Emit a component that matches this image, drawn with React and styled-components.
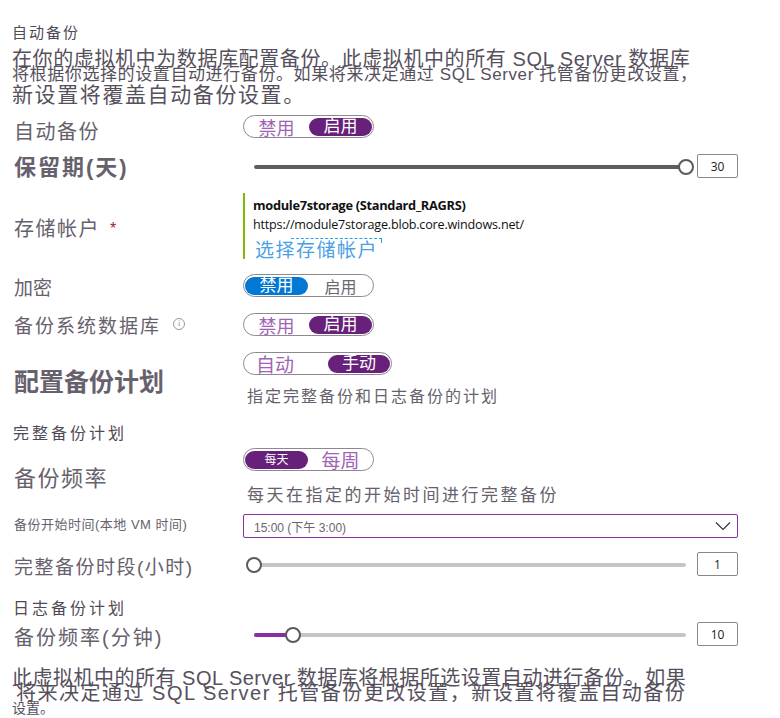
import React from 'react'
import styled, { createGlobalStyle } from 'styled-components'

const GlobalStyle = createGlobalStyle`
  html, body {
    margin: 0;
    padding: 0;
    background: #ffffff;
  }
  body {
    font-family: "Liberation Sans", "Noto Sans CJK SC", sans-serif;
    color: #625c69;
  }
`

const Page = styled.div`
  width: 780px;
  height: 718px;
  overflow: hidden;
  padding: 25px 0 0 12px;
  box-sizing: border-box;
`

const Heading = styled.div`
  font-size: ${p => p.$size || 15}px;
  line-height: ${p => p.$lh || 16}px;
  letter-spacing: ${p => p.$ls || 0}px;
  margin-top: ${p => p.$mt || 0}px;
  padding-left: ${p => p.$pl || 0}px;
  color: #4f4a56;
`

const Para = styled.div`
  margin-top: ${p => p.$mt || 0}px;
  white-space: nowrap;
`

const Line = styled.div`
  font-size: ${p => p.$size}px;
  line-height: ${p => p.$lh}px;
  height: ${p => p.$lh}px;
  padding-left: ${p => p.$pl || 0}px;
  letter-spacing: ${p => p.$ls || 0}px;
  color: #56505d;
`

const Row = styled.div`
  display: grid;
  grid-template-columns: 229px 495px;
  align-items: start;
  padding-left: 2px;
  margin-top: ${p => p.$mt || 0}px;
  height: ${p => p.$h}px;
`

const Label = styled.div`
  font-size: ${p => p.$size}px;
  line-height: ${p => p.$lh}px;
  letter-spacing: ${p => p.$ls || 0}px;
  padding-top: ${p => p.$pt || 0}px;
  font-weight: ${p => (p.$bold ? 600 : 400)};
  color: #67616d;
  white-space: nowrap;
  display: flex;
  align-items: center;
`

const Required = styled.span`
  color: #a4262c;
  font-size: 16px;
  margin-left: 10px;
`

const InfoIcon = styled.span`
  display: inline-flex;
  align-items: center;
  justify-content: center;
  width: 10px;
  height: 10px;
  border: 1px solid #9a9a9a;
  border-radius: 50%;
  font-size: 8px;
  line-height: 10px;
  letter-spacing: 0;
  color: #8a8a8a;
  margin-left: 12px;
  margin-top: -6px;
  font-family: "Liberation Serif", serif;
`

const Control = styled.div`
  display: flex;
  flex-direction: column;
  align-items: flex-start;
`

const Toggle = styled.div`
  display: flex;
  align-items: center;
  justify-content: space-between;
  width: ${p => p.$w || 131}px;
  height: 23px;
  box-sizing: border-box;
  border: 1px solid #8d8a8f;
  border-radius: 12px;
  padding: 0 1px;
`

const Option = styled.div`
  height: ${p => (p.$on ? 18 : 22)}px;
  width: ${p => p.$w || 63}px;
  border-radius: 10px;
  display: flex;
  align-items: center;
  justify-content: center;
  overflow: visible;
  white-space: nowrap;
  font-size: ${p => p.$size || 17}px;
  line-height: 18px;
  background: ${p => (p.$on ? (p.$blue ? '#0078d4' : '#68217a') : 'transparent')};
  color: ${p => (p.$on ? '#ffffff' : p.$gray ? '#6b6670' : '#a064b5')};
  padding-top: ${p => (p.$on ? 0 : 5)}px;
  box-sizing: border-box;
`

const Hint = styled.div`
  font-size: ${p => p.$size}px;
  line-height: ${p => p.$lh}px;
  letter-spacing: ${p => p.$ls || 0}px;
  margin-top: ${p => p.$mt}px;
  padding-left: 4px;
  color: #67616d;
  white-space: nowrap;
`

const SliderRow = styled.div`
  display: flex;
  align-items: center;
  height: 24px;
  width: 495px;
`

const Slider = styled.div`
  position: relative;
  width: 448px;
  height: 24px;
  margin-left: 3px;
`

const Track = styled.div`
  position: absolute;
  left: 8px;
  right: 8px;
  top: 11px;
  height: 4px;
  border-radius: 2px;
  background: ${p => (p.$dark ? '#605e5c' : '#c8c6c4')};
`

const Fill = styled.div`
  position: absolute;
  left: 8px;
  top: 11px;
  height: 4px;
  border-radius: 2px;
  background: #8a2da5;
`

const Thumb = styled.div`
  position: absolute;
  top: 5px;
  width: 16px;
  height: 16px;
  margin-left: -8px;
  box-sizing: border-box;
  border-radius: 50%;
  border: 2px solid #5c5a58;
  background: #ffffff;
`

const ValueBox = styled.div`
  width: 41px;
  height: 24px;
  box-sizing: border-box;
  margin-left: 3px;
  border: 1px solid #8a8886;
  border-radius: 2px;
  display: flex;
  align-items: center;
  justify-content: center;
  font-family: "Open Sans", "Liberation Sans", sans-serif;
  font-size: 12px;
  color: #1b1b1b;
`

const Storage = styled.div`
  border-left: 2px solid #7fba00;
  height: 66px;
  box-sizing: border-box;
  padding: 2px 0 0 8px;
  display: flex;
  flex-direction: column;
`

const StorageName = styled.div`
  font-family: "Open Sans", "Liberation Sans", sans-serif;
  font-weight: 700;
  font-size: 12.8px;
  line-height: 21px;
  color: #111111;
  letter-spacing: -0.3px;
  flex-shrink: 0;
`

const StorageUrl = styled.div`
  font-family: "Open Sans", "Liberation Sans", sans-serif;
  font-size: 12.6px;
  line-height: 18px;
  color: #111111;
  letter-spacing: -0.2px;
  flex-shrink: 0;
`

const PickLink = styled.div`
  position: relative;
  flex-shrink: 0;
  font-size: 19px;
  line-height: 20px;
  margin-top: 7px;
  padding-left: 2px;
  color: #4aa0e6;
  letter-spacing: 1.5px;

  &::before {
    content: '';
    position: absolute;
    left: 38px;
    top: -3px;
    width: 90px;
    height: 4px;
    border-top: 1px dashed #2e9be6;
    border-right: 1px dashed #2e9be6;
  }
`

const Select = styled.div`
  width: 495px;
  height: 24px;
  box-sizing: border-box;
  border: 1px solid #8a2da5;
  border-radius: 2px;
  display: flex;
  align-items: center;
  justify-content: space-between;
  padding: 0 6px 0 10px;
  font-size: 12px;
  color: #6a6570;
`

const Chevron = () => (
  <svg width="16" height="10" viewBox="0 0 16 10">
    <path d="M1 1.5 L8 8.5 L15 1.5" fill="none" stroke="#333" strokeWidth="1.2" />
  </svg>
)

const RangeInput = ({ value, pct, dark, fill }) => (
  <SliderRow>
    <Slider>
      <Track $dark={dark} />
      {fill && <Fill style={{ width: `${pct * 432}px` }} />}
      <Thumb style={{ left: `${8 + pct * 432}px` }} />
    </Slider>
    <ValueBox>{value}</ValueBox>
  </SliderRow>
)

const App = () => {
  return (
    <Page>
      <GlobalStyle />
      <Heading $size={15} $lh={16} $ls={2}>自动备份</Heading>
      <Para $mt={12}>
        <Line $size={20} $lh={12} $ls={0.6}>在你的虚拟机中为数据库配置备份。此虚拟机中的所有 SQL Server 数据库</Line>
        <Line $size={17} $lh={20} $ls={0.6}>将根据你选择的设置自动进行备份。如果将来决定通过 SQL Server 托管备份更改设置，</Line>
        <Line $size={21} $lh={19} $ls={1.6}>新设置将覆盖自动备份设置。</Line>
      </Para>

      <Row $mt={11} $h={24}>
        <Label $size={20} $lh={22} $pt={6} $ls={1.5}>自动备份</Label>
        <Control>
          <Toggle>
            <Option $size={18}>禁用</Option>
            <Option $on>启用</Option>
          </Toggle>
        </Control>
      </Row>

      <Row $mt={15} $h={24}>
        <Label $size={22} $lh={24} $pt={2} $ls={2} $bold>保留期(天)</Label>
        <RangeInput value="30" pct={1} dark />
      </Row>

      <Row $mt={15} $h={66}>
        <Label $size={20} $lh={22} $pt={25} $ls={1.5}>
          存储帐户<Required>*</Required>
        </Label>
        <Storage>
          <StorageName>module7storage (Standard_RAGRS)</StorageName>
          <StorageUrl>https://module7storage.blob.core.windows.net/</StorageUrl>
          <PickLink>选择存储帐户</PickLink>
        </Storage>
      </Row>

      <Row $mt={15} $h={23}>
        <Label $size={19} $lh={22} $pt={4}>加密</Label>
        <Control>
          <Toggle>
            <Option $on $blue>禁用</Option>
            <Option $gray $size={16}>启用</Option>
          </Toggle>
        </Control>
      </Row>

      <Row $mt={16} $h={23}>
        <Label $size={19} $lh={22} $pt={3} $ls={2}>
          备份系统数据库<InfoIcon>i</InfoIcon>
        </Label>
        <Control>
          <Toggle>
            <Option $size={18}>禁用</Option>
            <Option $on>启用</Option>
          </Toggle>
        </Control>
      </Row>

      <Row $mt={16} $h={54}>
        <Label $size={25} $lh={28} $pt={16} $bold>配置备份计划</Label>
        <Control>
          <Toggle $w={149}>
            <Option $size={19} $w={60}>自动</Option>
            <Option $on $w={62}>手动</Option>
          </Toggle>
          <Hint $size={16} $lh={18} $mt={13} $ls={2}>指定完整备份和日志备份的计划</Hint>
        </Control>
      </Row>

      <Heading $size={16} $lh={18} $mt={19} $pl={1} $ls={3}>完整备份计划</Heading>

      <Row $mt={5} $h={58}>
        <Label $size={22} $lh={26} $pt={18} $ls={1.5}>备份频率</Label>
        <Control>
          <Toggle>
            <Option $on $size={12}>每天</Option>
            <Option $size={19}>每周</Option>
          </Toggle>
          <Hint $size={17} $lh={20} $mt={15} $ls={2.5}>每天在指定的开始时间进行完整备份</Hint>
        </Control>
      </Row>

      <Row $mt={8} $h={24}>
        <Label $size={13} $lh={16} $pt={3} $ls={0.5}>备份开始时间(本地 VM 时间)</Label>
        <Select>
          <span>15:00 (下午 3:00)</span>
          <Chevron />
        </Select>
      </Row>

      <Row $mt={14} $h={24}>
        <Label $size={19} $lh={24} $pt={4} $ls={1.5}>完整备份时段(小时)</Label>
        <RangeInput value="1" pct={0} />
      </Row>

      <Heading $size={16} $lh={18} $mt={24} $pl={1} $ls={3}>日志备份计划</Heading>

      <Row $mt={4} $h={24}>
        <Label $size={20} $lh={24} $pt={4} $ls={2}>备份频率(分钟)</Label>
        <RangeInput value="10" pct={0.09} fill />
      </Row>

      <Para $mt={26}>
        <Line $size={20} $lh={13} $ls={0.5}>此虚拟机中的所有 SQL Server 数据库将根据所选设置自动进行备份。如果</Line>
        <Line $size={20} $lh={16} $pl={4} $ls={1.5}>将来决定通过 SQL Server 托管备份更改设置，新设置将覆盖自动备份</Line>
        <Line $size={14} $lh={14}>设置。</Line>
      </Para>
    </Page>
  )
}

export default App
